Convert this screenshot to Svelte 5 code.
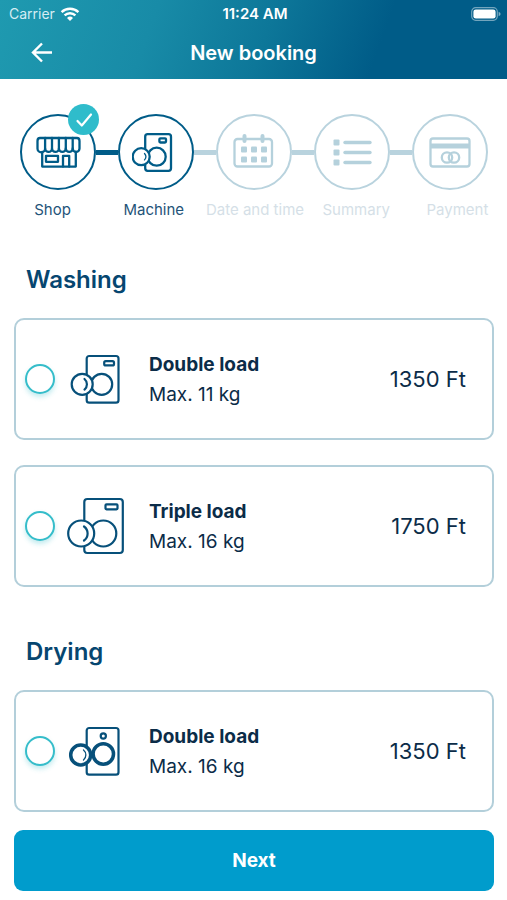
<script>
	const steps = [
		{ icon: 'shop', label: 'Shop', state: 'done' },
		{ icon: 'machine', label: 'Machine', state: 'active' },
		{ icon: 'calendar', label: 'Date and time', state: 'todo' },
		{ icon: 'list', label: 'Summary', state: 'todo' },
		{ icon: 'card', label: 'Payment', state: 'todo' }
	];

	const groups = [
		{
			title: 'Washing',
			machines: [
				{ id: 'wash-double', icon: 'washer', name: 'Double load', max: 11, price: 1350 },
				{ id: 'wash-triple', icon: 'washer-big', name: 'Triple load', max: 16, price: 1750 }
			]
		},
		{
			title: 'Drying',
			machines: [{ id: 'dry-double', icon: 'dryer', name: 'Double load', max: 16, price: 1350 }]
		}
	];

	let selected = $state('');
</script>

<header>
	<div class="status">
		<div class="carrier">
			<span>Carrier</span>
			<svg width="20" height="16" viewBox="0 0 20 16" fill="none" stroke="#fff" stroke-width="2.4">
				<path d="M1.6 6.2a12 12 0 0 1 16.8 0" />
				<path d="M4.6 9.4a7.8 7.8 0 0 1 10.8 0" />
				<path d="M10 15l-3-3.1a4.4 4.4 0 0 1 6 0z" fill="#fff" stroke="none" />
			</svg>
		</div>
		<span class="time">11:24 AM</span>
		<svg class="battery" width="30" height="14" viewBox="0 0 30 14">
			<rect x="0.7" y="0.7" width="25.6" height="12.6" rx="4" fill="none" stroke="#fff" stroke-opacity="0.45" stroke-width="1.2" />
			<rect x="2.4" y="2.4" width="22.2" height="9.2" rx="2.4" fill="#fff" />
			<path d="M27.6 4.8q2 .8 2 2.2t-2 2.2z" fill="#fff" fill-opacity="0.5" />
		</svg>
	</div>
	<div class="bar">
		<button class="back" aria-label="Back">
			<svg width="24" height="24" viewBox="0 0 24 24" fill="none" stroke="#fff" stroke-width="2.4">
				<path d="M22 11.5H3.5M12 2.5l-9 9 9 9" />
			</svg>
		</button>
		<h1>New booking</h1>
	</div>
</header>

<main>
	<div class="track">
		{#each steps as step, i}
			{#if i > 0}
				<div class="link" class:on={step.state !== 'todo'}></div>
			{/if}
			<div class="circle {step.state}">
				<svg width="48" height="48" viewBox="0 0 48 48" fill="none" stroke="currentColor" stroke-width="2.3" stroke-linejoin="round" stroke-linecap="round">
					{#if step.icon === 'shop'}
						<path d="M6 10h37q2.5 0 2.5 3v7.5a3.4 3.4 0 0 1-6.8 0 3.4 3.4 0 0 1-6.9 0 3.4 3.4 0 0 1-6.9 0 3.4 3.4 0 0 1-6.9 0 3.4 3.4 0 0 1-6.9 0 3.4 3.4 0 0 1-7.6 0V13q0-3 2.5-3z" />
						<path d="M11.1 10v10.5M18 10v10.5M24.9 10v10.5M31.8 10v10.5M38.7 10v10.5" />
						<path d="M8.2 24v14.6h33.6V24" />
						<rect x="12" y="27.8" width="12" height="6" />
						<path d="M29 38.5V27.8h6.2v10.7" />
					{:else if step.icon === 'machine'}
						<rect x="13.2" y="6.2" width="25.8" height="36.6" rx="2.5" />
						<rect x="27.4" y="10.3" width="6.6" height="4.2" rx="1" />
						<circle cx="24.7" cy="28.7" r="9" />
						<circle cx="9.2" cy="28.7" r="8.5" fill="#fff" />
						<path d="M12.5 25.5a4.8 4.8 0 0 1 0 6.4" stroke-width="1.3" />
					{:else if step.icon === 'calendar'}
						<rect x="4.5" y="11" width="37.5" height="27.5" rx="3" />
						<path d="M14.5 8v5M32.5 8v5" stroke-width="4" />
						<g fill="currentColor" stroke="none">
							{#each [18.5, 28.5] as y}
								{#each [11, 21, 31] as x}
									<rect {x} {y} width="6" height="6" rx="1" />
								{/each}
							{/each}
						</g>
					{:else if step.icon === 'list'}
						{#each [14.5, 24.5, 34.5] as y}
							<path d="M17 {y}h25" stroke-width="3.4" />
							<rect x="5.5" y={y - 3} width="6" height="6" rx="1" fill="currentColor" stroke="none" />
						{/each}
					{:else}
						<rect x="4.5" y="10.5" width="39" height="28" rx="2.5" />
						<path d="M5 18h38" stroke-width="4.8" stroke-linecap="butt" />
						<circle cx="21" cy="29.5" r="5.2" />
						<circle cx="28" cy="29.5" r="5.2" />
					{/if}
				</svg>
				{#if step.state === 'done'}
					<span class="badge">
						<svg width="18" height="18" viewBox="0 0 18 18" fill="none" stroke="#fff" stroke-width="2.2" stroke-linecap="round" stroke-linejoin="round">
							<path d="M2.5 10l4.3 4.5L16 3.5" />
						</svg>
					</span>
				{/if}
			</div>
		{/each}
	</div>
	<div class="labels">
		{#each steps as step}
			<span class={step.state}>{step.label}</span>
		{/each}
	</div>

	{#each groups as group}
		<section>
			<h2>{group.title}</h2>
			<div class="cards">
				{#each group.machines as m}
					<label class="card" for={m.id}>
						<input type="radio" id={m.id} name="machine" value={m.id} bind:group={selected} />
						<svg width="60" height="60" viewBox="0 0 60 60" fill="none" stroke="currentColor" stroke-width="2.2" stroke-linecap="round">
							{#if m.icon === 'washer'}
								<rect x="20.7" y="7" width="31.8" height="46.7" rx="2.5" />
								<rect x="38.2" y="12.2" width="9.8" height="4.2" rx="1.5" />
								<circle cx="35.7" cy="35.3" r="10.5" />
								<circle cx="16.2" cy="35.3" r="10.5" fill="#fff" />
								<path d="M18.5 30a7 7 0 0 1 0 10.6" />
							{:else if m.icon === 'washer-big'}
								<rect x="18.3" y="3" width="38.5" height="54" rx="3" />
								<rect x="39.5" y="8.3" width="12" height="5" rx="1" />
								<circle cx="37.3" cy="37.5" r="13" />
								<circle cx="15.2" cy="37.5" r="13" fill="#fff" />
								<path d="M18 30.5a8.6 8.6 0 0 1 0 14" />
							{:else}
								<rect x="20.7" y="7" width="31.8" height="46.7" rx="2.5" />
								<circle cx="37.3" cy="15" r="2.6" />
								<circle cx="37.3" cy="33" r="10.2" stroke-width="3.5" />
								<circle cx="14.7" cy="34" r="10" fill="#fff" stroke-width="3.5" />
								<path d="M17.5 29a6.5 6.5 0 0 1 0 10" stroke-width="1.3" />
							{/if}
						</svg>
						<span class="info">
							<strong>{m.name}</strong>
							<span>Max. {m.max} kg</span>
						</span>
						<span class="price">{m.price} Ft</span>
					</label>
				{/each}
			</div>
		</section>
	{/each}

	<button class="next">Next</button>
</main>

<style>
	:global(body) {
		background: #fff;
		font-family: Inter, 'Liberation Sans', sans-serif;
		color: #0b2c48;
	}

	header {
		color: #fff;
		background: linear-gradient(110deg, #1f9ab0 0%, #188ba7 30%, #0d7799 52%, #005c88 74%);
	}

	.status {
		display: grid;
		grid-template-columns: 1fr auto 1fr;
		align-items: center;
		height: 27px;
		padding: 0 6px 0 9px;
		font-size: 14px;
	}

	.carrier {
		display: flex;
		align-items: center;
		gap: 5px;
		color: #d5edf3;
	}

	.time {
		font-size: 15px;
		font-weight: 600;
	}

	.battery {
		justify-self: end;
	}

	.bar {
		display: grid;
		grid-template-columns: 24px 1fr 24px;
		align-items: center;
		height: 52px;
		padding: 0 30px;
	}

	.back {
		display: flex;
		padding: 0;
		border: 0;
		background: none;
		cursor: pointer;
	}

	h1 {
		margin: 0;
		text-align: center;
		font-size: 20px;
		font-weight: 600;
	}

	main {
		padding: 35px 13px 9px 14px;
	}

	.track {
		display: flex;
		align-items: center;
		padding: 0 6px;
	}

	.circle {
		position: relative;
		box-sizing: border-box;
		display: flex;
		align-items: center;
		justify-content: center;
		flex: none;
		width: 76px;
		height: 76px;
		border: 2px solid #005c88;
		border-radius: 50%;
		color: #005c88;
	}

	.circle.todo {
		border-color: #b9d3de;
		color: #b5d1dc;
	}

	.link {
		flex: 1;
		height: 5px;
		background: #b9d3de;
	}

	.link.on {
		background: #005c88;
	}

	.badge {
		position: absolute;
		top: -12px;
		right: -5px;
		display: flex;
		align-items: center;
		justify-content: center;
		width: 31px;
		height: 31px;
		border-radius: 50%;
		background: #2fbccb;
	}

	.labels {
		display: grid;
		grid-template-columns: repeat(5, 1fr);
		margin: 10px -14px 0 -12px;
		font-size: 15px;
		line-height: 20px;
		text-align: center;
		white-space: nowrap;
		color: #1f5479;
	}

	.labels .todo {
		color: #d5dfe7;
	}

	section {
		margin-top: 50px;
	}

	.labels + section {
		margin-top: 45px;
	}

	h2 {
		margin: 0 0 23px 12px;
		font-size: 24px;
		font-weight: 600;
		line-height: 30px;
		color: #064670;
	}

	.cards {
		display: grid;
		gap: 25px;
	}

	.card {
		box-sizing: border-box;
		display: flex;
		align-items: center;
		min-height: 122px;
		padding: 0 26px 0 9px;
		border: 2px solid #b3cfda;
		border-radius: 10px;
		cursor: pointer;
	}

	.card svg {
		flex: none;
		margin: 0 23px 0 11px;
		color: #07507a;
	}

	input {
		appearance: none;
		flex: none;
		width: 30px;
		height: 30px;
		margin: 0;
		border: 2px solid #35bdca;
		border-radius: 50%;
		background: #fff;
		box-shadow: 0 3px 5px rgba(53, 189, 202, 0.3);
		cursor: pointer;
	}

	input:checked {
		background: radial-gradient(#35bdca 50%, #fff 55%);
	}

	.info {
		display: flex;
		flex-direction: column;
		flex: 1;
		padding-top: 2px;
		font-size: 19px;
		line-height: 30px;
	}

	.info strong {
		font-weight: 700;
	}

	.price {
		font-size: 22px;
	}

	.next {
		display: block;
		width: 100%;
		height: 61px;
		margin-top: 18px;
		border: 0;
		border-radius: 9px;
		background: #009ccc;
		color: #fff;
		font-family: inherit;
		font-size: 19px;
		font-weight: 700;
		cursor: pointer;
	}
</style>
